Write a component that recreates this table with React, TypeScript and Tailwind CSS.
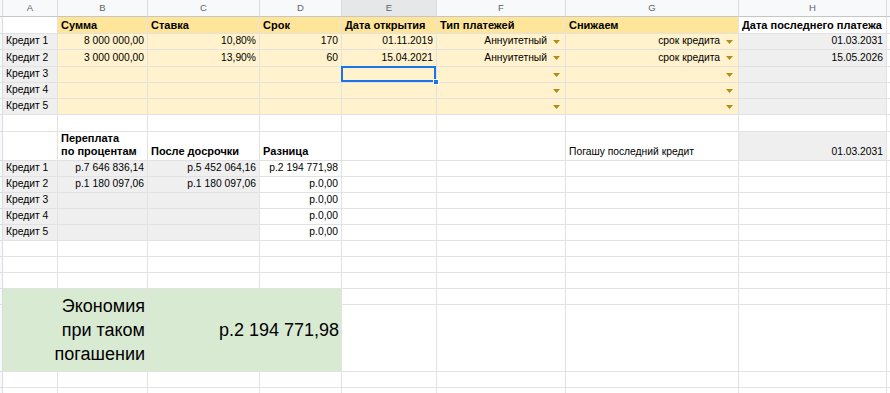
import React from "react";

type CellProps = {
  children?: React.ReactNode;
  className?: string;
};

const Cell = ({ children, className = "" }: CellProps) => (
  <div
    className={`flex min-w-0 overflow-hidden whitespace-nowrap border-r border-b border-[#e2e2e2] px-[3px] ${className}`}
  >
    {children}
  </div>
);

const Caret = () => (
  <svg width="7" height="4" viewBox="0 0 7 4" className="shrink-0">
    <path d="M0 0h7L3.5 4z" fill="#b38b18" />
  </svg>
);

const Dropdown = ({ value = "" }: { value?: string }) => (
  <Cell className="items-center justify-end gap-[6px] bg-[#fff2cc] pr-[5px]">
    <span>{value}</span>
    <Caret />
  </Cell>
);

const Strip = ({ header = false }: { header?: boolean }) => (
  <div
    className={`border-r border-b border-[#dadce0] bg-[#f8f9fa] ${header ? "border-b-[#c4c7c5]" : ""}`}
  />
);

const Edge = () => <div className="border-b border-[#e2e2e2] bg-white" />;

const Blank = () => <Cell className="bg-white" />;

const letters = ["A", "B", "C", "D", "E", "F", "G", "H"];

const loans = [
  { n: 1, sum: "8 000 000,00", rate: "10,80%", term: "170", open: "01.11.2019", type: "Аннуитетный", lower: "срок кредита", last: "01.03.2031" },
  { n: 2, sum: "3 000 000,00", rate: "13,90%", term: "60", open: "15.04.2021", type: "Аннуитетный", lower: "срок кредита", last: "15.05.2026" },
  { n: 3 },
  { n: 4 },
  { n: 5 },
];

const overpay = [
  { before: "р.7 646 836,14", after: "р.5 452 064,16", diff: "р.2 194 771,98" },
  { before: "р.1 180 097,06", after: "р.1 180 097,06", diff: "р.0,00" },
  { before: "", after: "", diff: "р.0,00" },
  { before: "", after: "", diff: "р.0,00" },
  { before: "", after: "", diff: "р.0,00" },
];

const BlankRow = () => (
  <>
    <Strip />
    {letters.map((l) => (
      <Blank key={l} />
    ))}
    <Edge />
  </>
);

export default function App() {
  return (
    <div className="h-[393px] w-[890px] overflow-hidden bg-white font-['Liberation_Sans',Arial,sans-serif] text-[10.3px] leading-none text-black">
      <div className="grid grid-cols-[3px_55px_90px_112px_82px_95px_129px_173px_148px_3px] grid-rows-[17px_17px_16px_17px_16px_16px_16px_17px_29px_16px_16px_16px_16px_16px_16px_16px_16px_16px_67px_16px_16px]">
        {/* column letters */}
        <Strip header />
        {letters.map((l) => (
          <div
            key={l}
            className={`flex items-center justify-center border-r border-b border-r-[#dadce0] border-b-[#c4c7c5] text-[9.5px] text-[#5f6368] ${l === "E" ? "bg-[#e6e7e9]" : "bg-[#f8f9fa]"}`}
          >
            {l}
          </div>
        ))}
        <div className="border-b border-[#c4c7c5] bg-[#f8f9fa]" />

        {/* table headers */}
        <Strip />
        <Blank />
        {["Сумма", "Ставка", "Срок", "Дата открытия", "Тип платежей", "Снижаем"].map((h) => (
          <Cell key={h} className="items-center bg-[#ffe599] text-[11px] font-bold">
            {h}
          </Cell>
        ))}
        <Cell className="items-center bg-white text-[11px] font-bold">Дата последнего платежа</Cell>
        <Edge />

        {/* loans */}
        {loans.map((r) => (
          <React.Fragment key={r.n}>
            <Strip />
            <Cell className="items-center bg-[#efefef]">Кредит {r.n}</Cell>
            <Cell className="items-center justify-end bg-[#fff2cc]">{r.sum}</Cell>
            <Cell className="items-center justify-end bg-[#fff2cc]">{r.rate}</Cell>
            <Cell className="items-center justify-end bg-[#fff2cc]">{r.term}</Cell>
            {r.n === 3 ? (
              <div className="relative z-10 flex border-r border-b border-[#e2e2e2] bg-[#fff2cc]">
                <div className="absolute -top-px -left-px right-0 bottom-0 border-2 border-[#1a73e8]" />
                <div className="absolute -right-[3px] -bottom-[3px] h-[6px] w-[6px] border border-white bg-[#1a73e8]" />
              </div>
            ) : (
              <Cell className="items-center justify-end bg-[#fff2cc]">{r.open}</Cell>
            )}
            <Dropdown value={r.type} />
            <Dropdown value={r.lower} />
            <Cell className="items-center justify-end bg-[#efefef]">{r.last}</Cell>
            <Edge />
          </React.Fragment>
        ))}

        <BlankRow />

        {/* overpayment headers */}
        <Strip />
        <Blank />
        <Cell className="flex-col justify-end bg-white pb-[2px] text-[11px] font-bold leading-[13px]">
          <span>Переплата</span>
          <span>по процентам</span>
        </Cell>
        <Cell className="items-end bg-white pb-[3px] text-[11px] font-bold">После досрочки</Cell>
        <Cell className="items-end bg-white pb-[3px] text-[11px] font-bold">Разница</Cell>
        <Blank />
        <Blank />
        <Cell className="items-end bg-white pb-[3px]">Погашу последний кредит</Cell>
        <Cell className="items-end justify-end bg-[#efefef] pb-[3px]">01.03.2031</Cell>
        <Edge />

        {overpay.map((r, i) => (
          <React.Fragment key={i}>
            <Strip />
            <Cell className="items-center bg-[#efefef]">Кредит {i + 1}</Cell>
            <Cell className="items-center justify-end bg-[#efefef]">{r.before}</Cell>
            <Cell className="items-center justify-end bg-[#efefef]">{r.after}</Cell>
            <Cell className="items-center justify-end bg-white">{r.diff}</Cell>
            <Blank />
            <Blank />
            <Blank />
            <Blank />
            <Edge />
          </React.Fragment>
        ))}

        <BlankRow />
        <BlankRow />
        <BlankRow />

        {/* savings */}
        <Strip />
        <div className="col-span-2 row-span-2 flex flex-col items-end justify-center border-r border-b border-[#e2e2e2] bg-[#d9ead3] pr-[2px] text-[18px] leading-[24px]">
          <span>Экономия</span>
          <span>при таком</span>
          <span>погашении</span>
        </div>
        <div className="col-span-2 row-span-2 flex items-center justify-end border-r border-b border-[#e2e2e2] bg-[#d9ead3] pr-[2px] text-[18px]">
          р.2 194 771,98
        </div>
        <Blank />
        <Blank />
        <Blank />
        <Blank />
        <Edge />
        <Strip />
        <Blank />
        <Blank />
        <Blank />
        <Blank />
        <Edge />

        <BlankRow />
        <BlankRow />
      </div>
    </div>
  );
}
